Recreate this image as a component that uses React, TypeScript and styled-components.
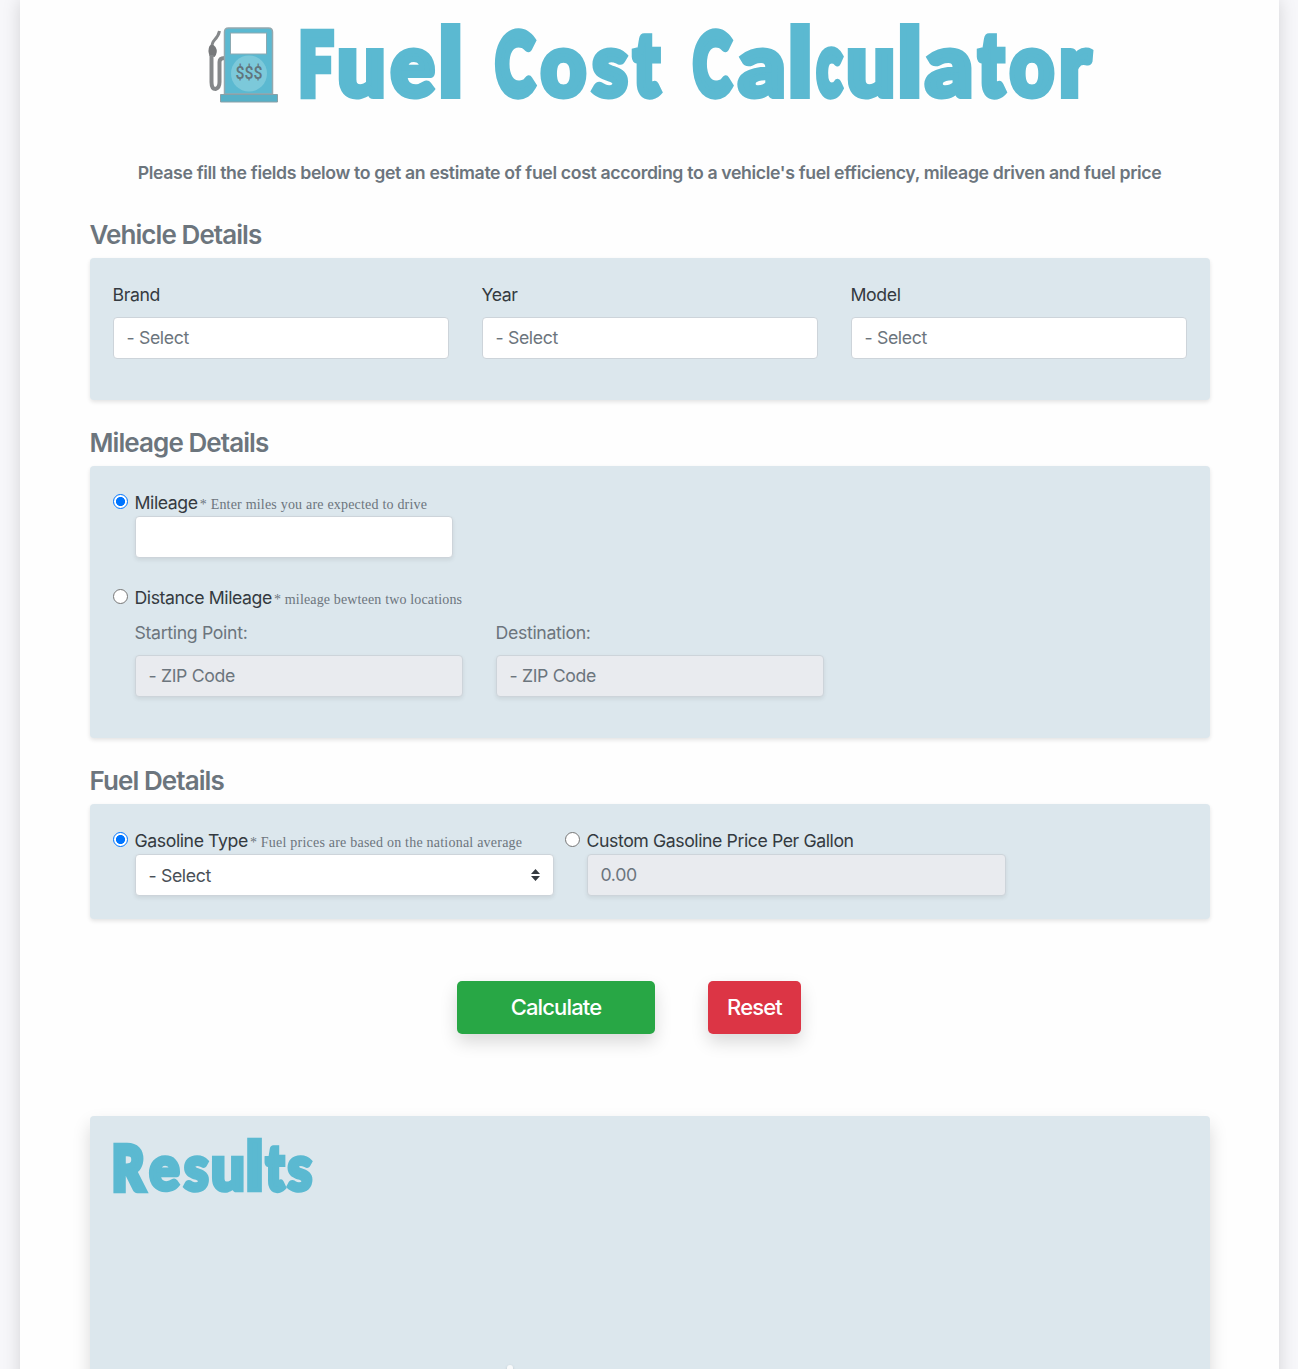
import React from "react";
import styled, { createGlobalStyle } from "styled-components";

const GlobalStyle = createGlobalStyle`
  * { box-sizing: border-box; }
  html, body { margin: 0; background: #f7f7fa; }
  body {
    font-family: Inter, "Liberation Sans", sans-serif;
    font-size: 17.7px;
    line-height: 27px;
    color: #343a40;
    overflow: hidden;
  }
`;

const Page = styled.div`
  height: 1369px;
  padding: 0 19px 0 20px;
  overflow: hidden;
`;

const Sheet = styled.main`
  height: 1500px;
  padding: 0 69.500px 0 69.500px;
  background: #fefefe;
  box-shadow: 0 0 17px rgba(0, 0, 0, 0.15);
`;

const Banner = styled.h1`
  margin: 0;
  height: 122px;
`;

const Art = styled.svg`
  display: block;
  overflow: visible;
`;

const Letters = styled.text`
  font-family: Lato, "Open Sans", sans-serif;
  font-weight: 900;
  fill: #5bb9d1;
  stroke: #5bb9d1;
  stroke-linejoin: miter;
  stroke-miterlimit: 3;
`;

const Intro = styled.p`
  margin: 37px 0 0;
  text-align: center;
  font-weight: 600;
  font-size: 17.7px;
  letter-spacing: -0.355px;
  color: #6c757d;
  white-space: nowrap;
`;

const SectionTitle = styled.h2<{ $top: number }>`
  margin: ${(p) => p.$top}px 0 7px;
  font-size: 26px;
  line-height: 32px;
  font-weight: 600;
  letter-spacing: -0.92px;
  color: #6c757d;
`;

const Panel = styled.section<{ $height: number }>`
  height: ${(p) => p.$height}px;
  padding: 23px 23px 0;
  border-radius: 4px;
  background: #dce7ed;
  box-shadow: 0 2px 4px rgba(0, 0, 0, 0.11);
`;

const Columns = styled.div`
  display: grid;
  grid-template-columns: repeat(3, 336px);
  gap: 33px;
`;

const Field = styled.label<{ $muted?: boolean }>`
  display: flex;
  flex-direction: column;
  gap: 9px;
  letter-spacing: ${(p) => (p.$muted ? -0.33 : -0.4)}px;
  color: ${(p) => (p.$muted ? "#6c757d" : "#343a40")};
`;

const TextInput = styled.input<{ $width?: number; $raised?: boolean }>`
  display: block;
  width: ${(p) => (p.$width ? p.$width + "px" : "100%")};
  height: 42px;
  padding: 0 13px 1px;
  border: 1px solid #cdd4da;
  border-radius: 4px;
  background: #fff;
  font: inherit;
  letter-spacing: -0.35px;
  color: #495057;
  box-shadow: ${(p) => (p.$raised ? "0 2px 4px rgba(0, 0, 0, 0.08)" : "none")};
  &::placeholder { color: #6c757d; opacity: 1; }
  &:disabled { background: #e9ebef; }
`;

const Option = styled.div`
  display: grid;
  grid-template-columns: 14px auto;
  column-gap: 8px;
  justify-content: start;
`;

const Radio = styled.input`
  appearance: none;
  width: 15px;
  height: 15px;
  margin: 5px 0 0;
  border: 1px solid #767676;
  border-radius: 50%;
  background: #fff;
  &:checked {
    border-color: #0075ff;
    background: radial-gradient(circle, #0075ff 4.2px, #fff 4.9px);
  }
`;

const OptionLabel = styled.div`
  height: 27px;
  white-space: nowrap;
  letter-spacing: -0.42px;
`;

const Hint = styled.small<{ $spacing: number }>`
  margin-left: -2.5px;
  font-family: "Liberation Serif", serif;
  font-size: 14px;
  line-height: 0;
  letter-spacing: ${(p) => p.$spacing}px;
  color: #6c757d;
`;

const OptionBody = styled.div`
  grid-column: 2;
`;

const Pair = styled.div<{ $gap: number }>`
  display: flex;
  gap: ${(p) => p.$gap}px;
`;

const ZipRow = styled(Pair)`
  padding-top: 8px;
`;

const Spacer = styled.div`
  height: 26px;
`;

const Picker = styled.button`
  display: flex;
  align-items: center;
  justify-content: space-between;
  width: 419px;
  height: 42px;
  padding: 0 13px;
  border: 1px solid #cdd4da;
  border-radius: 4px;
  background: #fff;
  font: inherit;
  letter-spacing: -0.35px;
  color: #495057;
  box-shadow: 0 2px 4px rgba(0, 0, 0, 0.08);
`;

const Actions = styled.div`
  display: flex;
  gap: 53px;
  padding: 62px 0 82px 367.500px;
`;

const ActionButton = styled.button<{ $tone: string; $width: number }>`
  width: ${(p) => p.$width}px;
  height: 53px;
  padding: 0;
  border: 0;
  border-radius: 5px;
  background: ${(p) => p.$tone};
  color: #fff;
  font: inherit;
  font-size: 22px;
  font-weight: 500;
  letter-spacing: -0.85px;
  box-shadow: 0 8px 17px rgba(0, 0, 0, 0.15);
`;

const Results = styled.section`
  display: flex;
  flex-direction: column;
  height: 380px;
  padding: 14px 23px 0;
  border-radius: 4px;
  background: #dce7ed;
  box-shadow: 0 9px 18px rgba(0, 0, 0, 0.15);
`;

const ResultsTitle = styled.h2`
  margin: 0;
  height: 235px;
`;

const Marker = styled.span`
  width: 6px;
  height: 12px;
  margin-left: 394px;
  border-radius: 3px;
  background: #f8f9fa;
  box-shadow: 0 1px 3px rgba(0, 0, 0, 0.16);
`;

const FuelPump = () => (
  <g>
    <path d="M219 31 Q218 36 214 40 Q211 43 211 50" fill="none" stroke="#85888a" strokeWidth="3" />
    <path d="M209 46 Q212 43 215 47 Q218 52 214 57 L209 56 Q207 50 209 46" fill="#77797b" />
    <path d="M211 55 V82 Q211 89 215 89 Q219 88 219 82 V62 Q219 58 224 58" fill="none" stroke="#85888a" strokeWidth="4" />
    <path d="M224 94 V32 Q224 28 228 28 H268 Q272 28 272 32 V94 Z" fill="#5bb9d1" stroke="#94a8ae" strokeWidth="1.5" />
    <path d="M220 94.5 H277 V102 H220 Z" fill="#56b0c7" stroke="#8ba0a7" strokeWidth="1" />
    <rect x="230" y="33" width="36" height="21" fill="#fff" stroke="#8ba9b2" />
    <circle cx="248.500" cy="73.500" r="18" fill="#7cc9da" />
    <text x="235" y="79" fontFamily="Roboto, sans-serif" fontSize="18" fontWeight="500" fill="#61757d" textLength="27" lengthAdjust="spacingAndGlyphs">$$$</text>
  </g>
);

// Left bearing, right bearing and advance of each display letter, in em.
const metrics: Record<string, [number, number, number]> = {
  F: [0.075, 0.03, 0.555],
  R: [0.075, 0.0, 0.63],
  C: [0.03, 0.02, 0.65],
  u: [0.06, 0.06, 0.58],
  e: [0.03, 0.03, 0.54],
  l: [0.065, 0.065, 0.275],
  o: [0.03, 0.03, 0.58],
  s: [0.025, 0.03, 0.455],
  t: [0.01, 0.015, 0.39],
  c: [0.03, 0.02, 0.475],
  a: [0.035, 0.055, 0.52],
  r: [0.06, 0.01, 0.405],
};

// Horizontal condensing applied to the whole word before each letter is fitted.
const CONDENSE = 0.7;

type WordProps = { text: string; spans: [number, number][]; size: number; weight: number; y: number };

// Sets a word in condensed display letters, each one fitted to its own span.
const Wordmark = ({ text, spans, size, weight, y }: WordProps) => (
  <Letters transform={`scale(${CONDENSE} 1)`} y={y} fontSize={size}>
    {text.split("").map((letter, i) => {
      const [lsb, rsb, advance] = metrics[letter];
      const [left, right] = spans[i];
      const heavy = "FRCct".includes(letter);
      const stroke = heavy ? weight * 1.4 : weight;
      const em = size * (letter === "l" ? 1.055 : heavy ? 0.968 : 1);
      const ratio = (right - left) / (em * (advance - lsb - rsb) + stroke);
      return (
        <tspan
          key={i}
          x={(left + (stroke / 2 - lsb * em) * ratio) / CONDENSE}
          y={y - (stroke - weight) / 2}
          fontSize={em}
          strokeWidth={stroke}
          textLength={(advance * em * ratio) / CONDENSE}
          lengthAdjust="spacingAndGlyphs"
        >
          {letter}
        </tspan>
      );
    })}
  </Letters>
);

const words: { text: string; spans: [number, number][] }[] = [
  { text: "Fuel", spans: [[300, 333.5], [339, 383], [390, 434.5], [441, 459.5]] },
  { text: "Cost", spans: [[494, 535], [540, 586], [591, 627.5], [631, 660.5]] },
  {
    text: "Calculator",
    spans: [[692, 732], [738, 783], [790.5, 809], [815.5, 842.5], [848, 892.5], [900, 918.5], [925, 970.5], [976, 1005], [1009, 1054], [1060.5, 1092]],
  },
];

const resultSpans: [number, number][] = [[113, 146], [148.5, 179.5], [183, 208.5], [212, 243], [247, 261], [264, 285], [286.5, 312]];

const zips = [{ label: "Starting Point:" }, { label: "Destination:" }];

export default function App() {
  return (
    <>
      <GlobalStyle />
      <Page>
        <Sheet>
          <Banner>
            <Art width="1120" height="122" viewBox="89.500 0 1120 122">
              <FuelPump />
              {words.map((w) => (
                <Wordmark key={w.text} text={w.text} spans={w.spans} size={88} weight={6} y={96.5} />
              ))}
            </Art>
          </Banner>
          <Intro>
            Please fill the fields below to get an estimate of fuel cost according to a vehicle's fuel efficiency, mileage driven and fuel price
          </Intro>

          <SectionTitle $top={33}>Vehicle Details</SectionTitle>
          <Panel $height={142}>
            <Columns>
              {["Brand", "Year", "Model"].map((name) => (
                <Field key={name}>
                  {name}
                  <TextInput placeholder="- Select" />
                </Field>
              ))}
            </Columns>
          </Panel>

          <SectionTitle $top={27}>Mileage Details</SectionTitle>
          <Panel $height={272}>
            <Option>
              <Radio type="radio" name="mileage" defaultChecked />
              <OptionLabel>
                Mileage <Hint $spacing={0.2}>* Enter miles you are expected to drive</Hint>
              </OptionLabel>
              <OptionBody>
                <TextInput $width={318} $raised />
              </OptionBody>
            </Option>
            <Spacer />
            <Option>
              <Radio type="radio" name="mileage" />
              <OptionLabel>
                Distance Mileage <Hint $spacing={0.15}>* mileage bewteen two locations</Hint>
              </OptionLabel>
              <OptionBody>
                <ZipRow $gap={33}>
                  {zips.map((z) => (
                    <Field key={z.label} $muted>
                      {z.label}
                      <TextInput placeholder="- ZIP Code" $width={328} $raised disabled />
                    </Field>
                  ))}
                </ZipRow>
              </OptionBody>
            </Option>
          </Panel>

          <SectionTitle $top={27}>Fuel Details</SectionTitle>
          <Panel $height={115}>
            <Pair $gap={11}>
              <Option>
                <Radio type="radio" name="fuel" defaultChecked />
                <OptionLabel>
                  Gasoline Type <Hint $spacing={0.22}>* Fuel prices are based on the national average</Hint>
                </OptionLabel>
                <OptionBody>
                  <Picker type="button">
                    - Select
                    <Art width="9" height="12" viewBox="0 0 9 12">
                      <path d="M0 5 L4.500 0 L9 5 Z M0 7 L4.500 12 L9 7 Z" fill="#343a40" />
                    </Art>
                  </Picker>
                </OptionBody>
              </Option>
              <Option>
                <Radio type="radio" name="fuel" />
                <OptionLabel>Custom Gasoline Price Per Gallon</OptionLabel>
                <OptionBody>
                  <TextInput placeholder="0.00" $width={419} $raised disabled />
                </OptionBody>
              </Option>
            </Pair>
          </Panel>

          <Actions>
            <ActionButton type="button" $tone="#28a745" $width={198}>Calculate</ActionButton>
            <ActionButton type="button" $tone="#dc3545" $width={93}>Reset</ActionButton>
          </Actions>

          <Results>
            <ResultsTitle>
              <Art width="240" height="80" viewBox="112.500 1130 240 80">
                <Wordmark text="Results" spans={resultSpans} size={63} weight={4.5} y={1190.5} />
              </Art>
            </ResultsTitle>
            <Marker />
          </Results>
        </Sheet>
      </Page>
    </>
  );
}
